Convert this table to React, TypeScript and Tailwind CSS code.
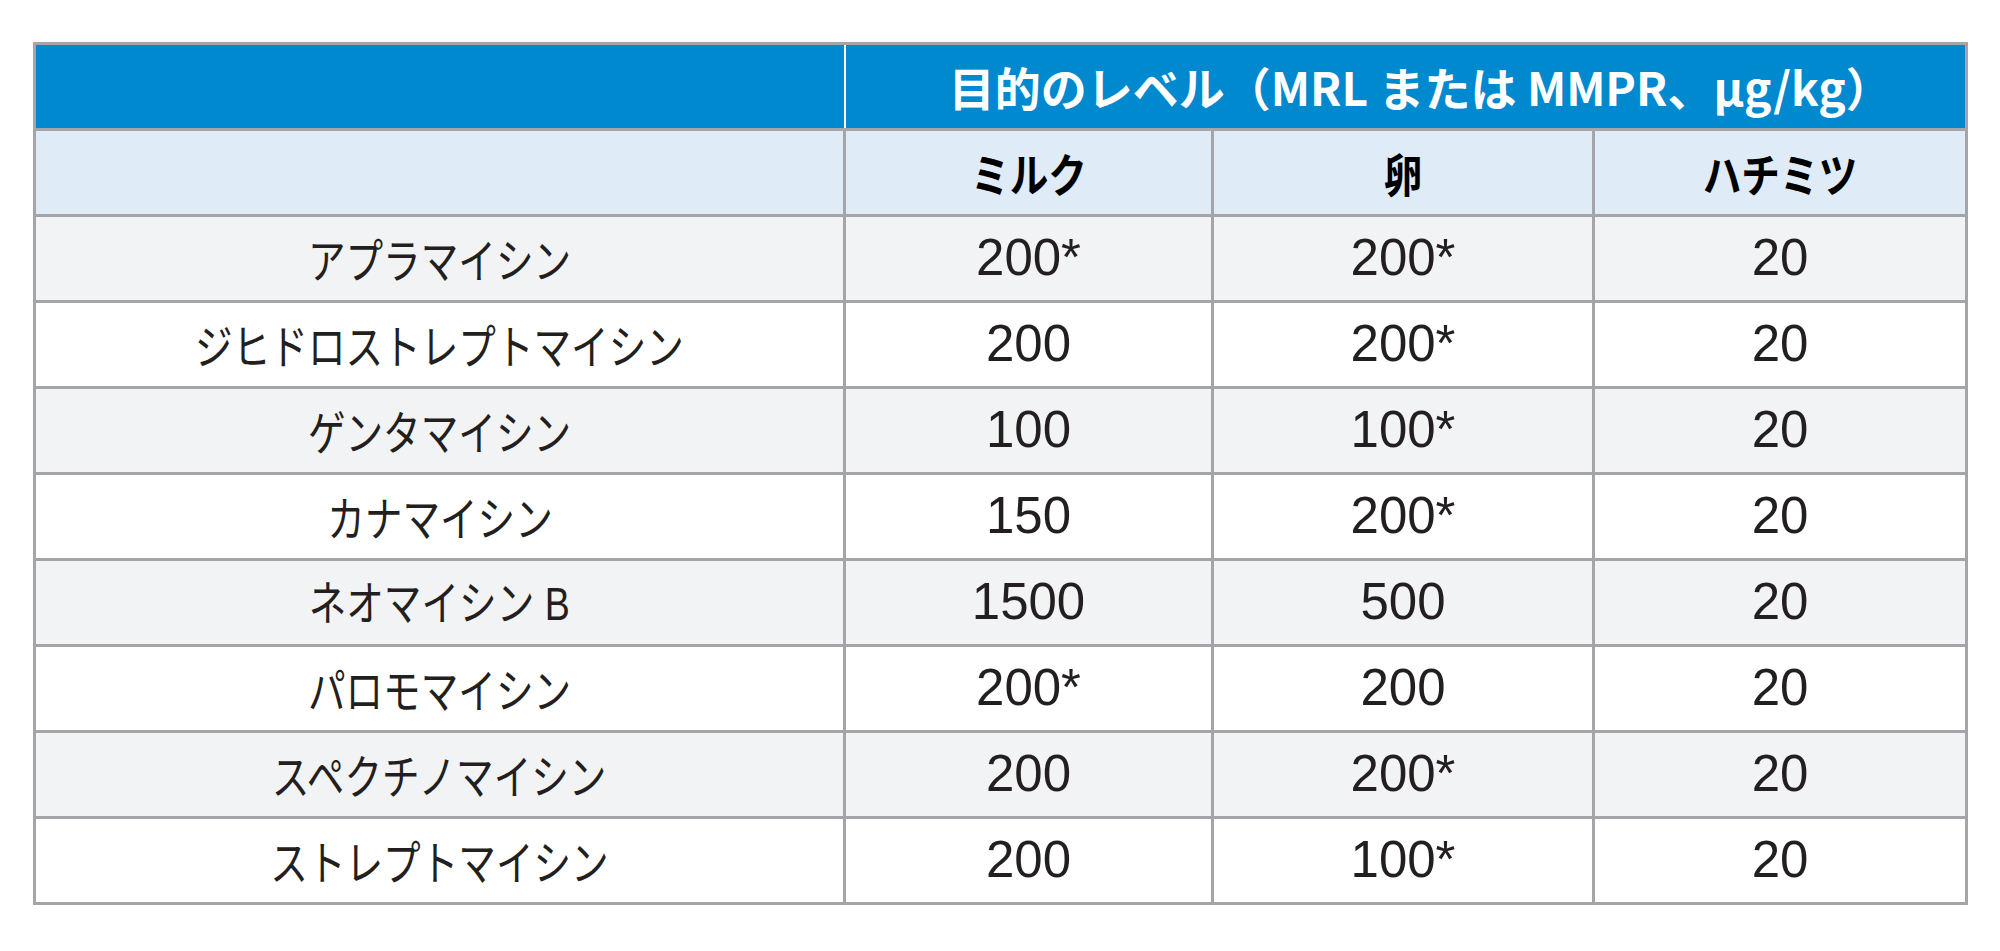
import React from 'react'

type Row = { name: string; suffix?: string; milk: string; egg: string; honey: string }

const rows: Row[] = [
    { name: 'アプラマイシン', milk: '200*', egg: '200*', honey: '20' },
    { name: 'ジヒドロストレプトマイシン', milk: '200', egg: '200*', honey: '20' },
    { name: 'ゲンタマイシン', milk: '100', egg: '100*', honey: '20' },
    { name: 'カナマイシン', milk: '150', egg: '200*', honey: '20' },
    { name: 'ネオマイシン', suffix: ' B', milk: '1500', egg: '500', honey: '20' },
    { name: 'パロモマイシン', milk: '200*', egg: '200', honey: '20' },
    { name: 'スペクチノマイシン', milk: '200', egg: '200*', honey: '20' },
    { name: 'ストレプトマイシン', milk: '200', egg: '100*', honey: '20' },
]

const jp = "font-['Noto_Sans_CJK_JP','Noto_Sans',sans-serif]"
const num = "font-['Liberation_Sans','Noto_Sans_CJK_JP',sans-serif]"

function Cell({ children, className = '', colSpan }: { children?: React.ReactNode; className?: string; colSpan?: number }) {
    return (
        <td colSpan={colSpan} className={`h-[86px] p-0 border-[3px] border-[#a3a5a8] text-center align-middle whitespace-nowrap ${className}`}>
            {children}
        </td>
    )
}

export default function App() {
    return (
        <div className="min-h-screen bg-white pl-[33px] pt-[42px]">
            <table className="w-[1932px] table-fixed border-collapse text-[#231f20]">
                <colgroup>
                    <col className="w-[810px]" />
                    <col className="w-[368px]" />
                    <col className="w-[381px]" />
                    <col className="w-[373px]" />
                </colgroup>
                <thead>
                    <tr className="bg-[#0089cf]">
                        <Cell className="border-r-2 border-r-white" />
                        <Cell colSpan={3} className="border-l-2 border-l-white">
                            <span className={`inline-block pl-[30px] text-[46px] font-bold text-white ${jp}`}>
                                目的のレベル（MRL または MMPR、µg/kg）
                            </span>
                        </Cell>
                    </tr>
                    <tr className="bg-[#dfebf7]">
                        <Cell />
                        <Cell><span className={`inline-block scale-x-[0.84] text-[46px] font-bold text-black ${jp}`}>ミルク</span></Cell>
                        <Cell><span className={`inline-block scale-x-[0.84] text-[46px] font-bold text-black ${jp}`}>卵</span></Cell>
                        <Cell><span className={`inline-block scale-x-[0.84] text-[46px] font-bold text-black ${jp}`}>ハチミツ</span></Cell>
                    </tr>
                </thead>
                <tbody>
                    {rows.map((r, i) => (
                        <tr key={r.name} className={i % 2 === 0 ? 'bg-[#f2f3f5]' : 'bg-white'}>
                            <Cell>
                                <span className={`inline-block scale-x-[0.8] text-[47px] ${jp}`}>
                                    {r.name}
                                    {r.suffix && <span className={`whitespace-pre ${num}`}>{r.suffix}</span>}
                                </span>
                            </Cell>
                            <Cell><span className={`text-[51px] ${num}`}>{r.milk}</span></Cell>
                            <Cell><span className={`text-[51px] ${num}`}>{r.egg}</span></Cell>
                            <Cell><span className={`text-[51px] ${num}`}>{r.honey}</span></Cell>
                        </tr>
                    ))}
                </tbody>
            </table>
        </div>
    )
}
